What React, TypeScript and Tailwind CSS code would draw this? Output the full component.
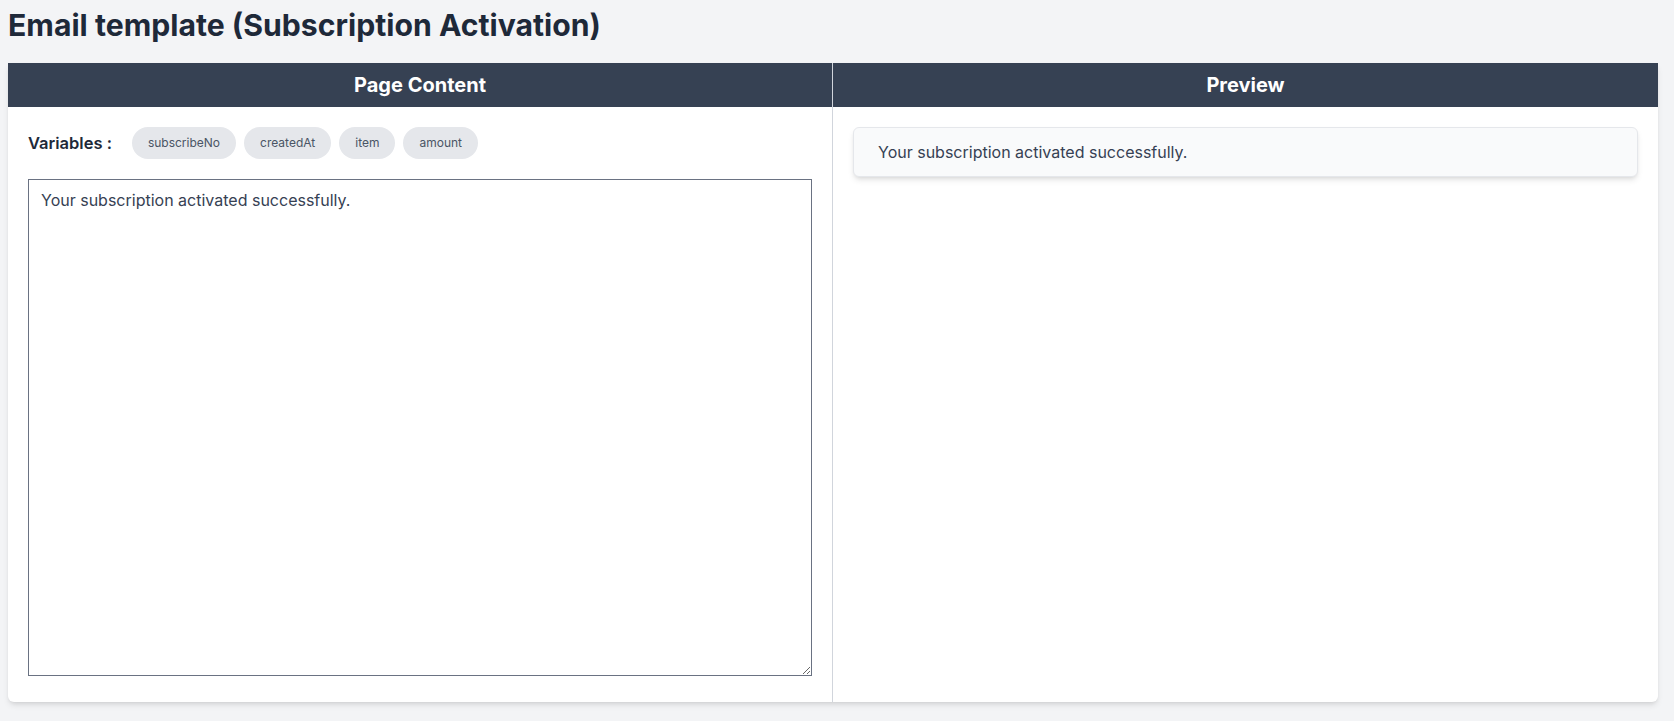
import { useState } from "react";

const VARIABLES = ["subscribeNo", "createdAt", "item", "amount"];

const App = () => {
  const [content, setContent] = useState("Your subscription activated successfully.");

  return (
    <div className="min-h-screen bg-gray-100 pl-2 pr-4 pt-[7px] pb-4 font-['Inter','Noto_Sans',sans-serif] text-gray-800">
      {/* Page title */}
      <h1 className="text-[30.2px] leading-9 font-bold text-gray-800 mb-5">Email template (Subscription Activation)</h1>

      {/* Editor card */}
      <div className="bg-white rounded-b-md shadow-md overflow-hidden grid grid-cols-2">
        {/* Left column */}
        <div className="border-r border-gray-300 flex flex-col">
          <div className="h-11 bg-gray-700 flex items-center justify-center text-white text-xl font-bold">Page Content</div>
          <div className="p-5 pb-[26px] flex flex-col gap-5">
            <div className="flex items-center">
              <span className="text-[16.5px] font-semibold text-gray-800 mr-5">Variables :</span>
              <div className="flex gap-2">
                {VARIABLES.map(v => (
                  <button key={v} className="h-8 px-4 rounded-full bg-gray-200 text-xs text-gray-600">
                    {v}
                  </button>
                ))}
              </div>
            </div>
            <textarea
              value={content}
              onChange={e => setContent(e.target.value)}
              className="block w-full h-[497px] border border-gray-500 px-3 py-2 text-base text-gray-700 outline-none resize-y"
            />
          </div>
        </div>

        {/* Right column */}
        <div className="flex flex-col">
          <div className="h-11 bg-gray-700 flex items-center justify-center text-white text-xl font-bold">Preview</div>
          <div className="p-5">
            <div className="bg-gray-50 border border-gray-200 rounded-md shadow-md px-6 py-[12px] text-base leading-6 text-gray-700">{content}</div>
          </div>
        </div>
      </div>
    </div>
  );
};

export default App;
